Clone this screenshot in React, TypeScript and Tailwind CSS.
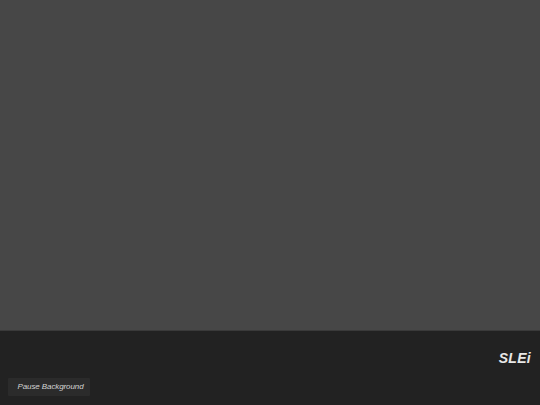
import { useState } from "react";

const App = () => {
  const [paused, setPaused] = useState(false);

  return (
    <div className="h-[405px] w-[540px] flex flex-col bg-[#222222] font-['Liberation_Sans',Arial,sans-serif] overflow-hidden">
      <div className="h-[331px] bg-[#474747] border-b border-[#3a3a3a]" />
      <div className="flex-1 flex flex-col px-2">
        <div className="flex justify-end pt-[20px] pr-[1px]">
          <span className="text-[14px] font-bold italic text-[#e8e8e8] leading-none tracking-[0.3px]">
            SLEi
          </span>
        </div>
        <div className="flex mt-[13px]">
          <button
            onClick={() => setPaused(!paused)}
            className="h-[18px] w-[82px] pl-[3px] bg-[#2b2b2b] text-[8px] italic text-[#d4d4d4] rounded-[1px] leading-none tracking-[-0.1px]"
          >
            {paused ? "Play Background" : "Pause Background"}
          </button>
        </div>
      </div>
    </div>
  );
};

export default App;
